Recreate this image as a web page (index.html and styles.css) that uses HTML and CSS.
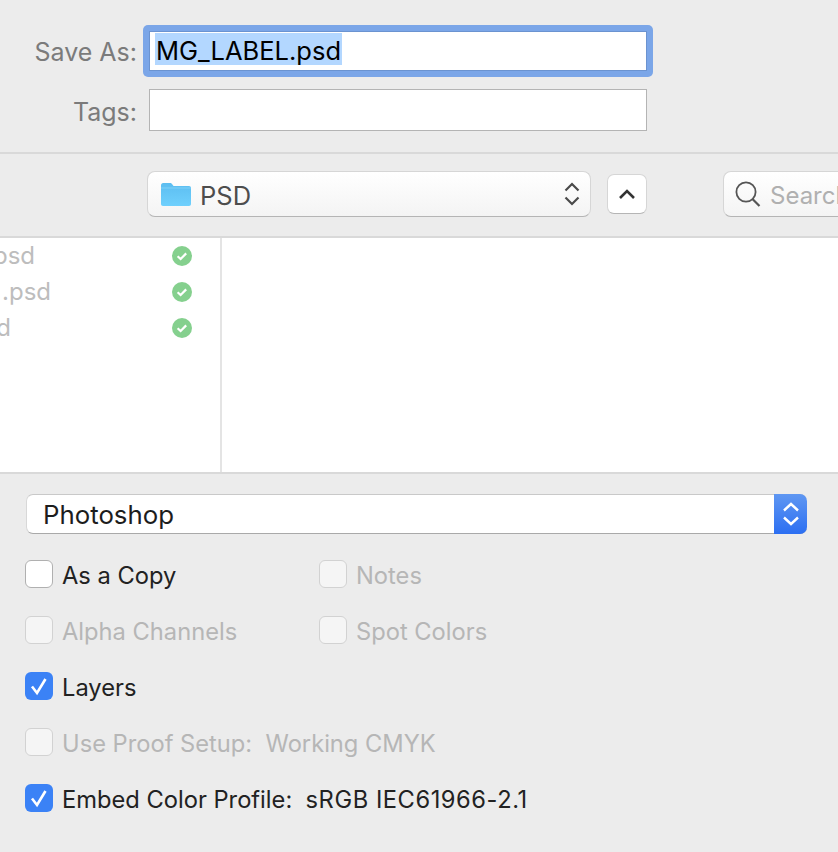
FILE: index.html
```html
<!DOCTYPE html>
<html lang="en">
<head>
    <meta charset="UTF-8">
    <meta name="viewport" content="width=device-width, initial-scale=1.0">
    <title>Save As</title>
    <link rel="stylesheet" href="styles.css">
</head>
<body>

    <!-- Name and tags -->
    <section class="name-area">
        <div class="field-row">
            <label class="field-label">Save As:</label>
            <div class="focus-ring">
                <div class="text-field text-field-focus"><span class="selected-text">MG_LABEL.psd</span></div>
            </div>
        </div>
        <div class="field-row tags-row">
            <label class="field-label">Tags:</label>
            <div class="text-field text-field-tags"></div>
        </div>
    </section>

    <!-- Folder toolbar -->
    <section class="toolbar">
        <div class="folder-select">
            <svg class="folder-icon" width="32" height="26" viewBox="0 0 32 26">
                <defs>
                    <linearGradient id="folder-fill" x1="0" y1="0" x2="0" y2="1">
                        <stop offset="0" stop-color="#5cbdf0"/>
                        <stop offset="1" stop-color="#6fd0fd"/>
                    </linearGradient>
                </defs>
                <path d="M1 4.5C1 3 1.8 2 3.2 2H10c1 0 1.6.4 2.2 1.2L13.5 5H29c1.2 0 2 .8 2 2v16c0 1.2-.8 2-2 2H3c-1.2 0-2-.8-2-2z" fill="url(#folder-fill)"/>
                <path d="M1 7h30" stroke="#7fd0f7" stroke-width="1"/>
            </svg>
            <span class="folder-name">PSD</span>
            <svg class="stepper-icon" width="18" height="26" viewBox="0 0 18 26">
                <path d="M2.5 9.5 9 3l6.5 6.5M2.5 16.5 9 23l6.5-6.5" fill="none" stroke="#4a4a4a" stroke-width="2.2"/>
            </svg>
        </div>
        <button class="up-button">
            <svg width="18" height="12" viewBox="0 0 18 12">
                <path d="M2 10 9 3l7 7" fill="none" stroke="#333" stroke-width="2.6"/>
            </svg>
        </button>
        <div class="search-box">
            <svg width="28" height="28" viewBox="0 0 28 28">
                <circle cx="12" cy="12" r="9.6" fill="none" stroke="#555" stroke-width="1.8"/>
                <path d="M18.5 19l7 7" stroke="#555" stroke-width="2.2"/>
            </svg>
            <span class="search-text">Search</span>
        </div>
    </section>

    <!-- File browser -->
    <section class="browser">
        <div class="file-column">
            <div class="file-row">
                <div class="file-name name-long"><span>psd</span></div>
                <svg class="check-badge" width="20" height="20" viewBox="0 0 20 20">
                    <circle cx="10" cy="10" r="10" fill="#85d08e"/>
                    <path d="M5.6 10.2 8.6 13l5.6-5.6" fill="none" stroke="#fff" stroke-width="2.2"/>
                </svg>
            </div>
            <div class="file-row">
                <div class="file-name name-mid"><span>.psd</span></div>
                <svg class="check-badge" width="20" height="20" viewBox="0 0 20 20">
                    <circle cx="10" cy="10" r="10" fill="#85d08e"/>
                    <path d="M5.6 10.2 8.6 13l5.6-5.6" fill="none" stroke="#fff" stroke-width="2.2"/>
                </svg>
            </div>
            <div class="file-row">
                <div class="file-name name-short"><span>d</span></div>
                <svg class="check-badge" width="20" height="20" viewBox="0 0 20 20">
                    <circle cx="10" cy="10" r="10" fill="#85d08e"/>
                    <path d="M5.6 10.2 8.6 13l5.6-5.6" fill="none" stroke="#fff" stroke-width="2.2"/>
                </svg>
            </div>
        </div>
        <div class="preview-column"></div>
    </section>

    <!-- Format options -->
    <section class="options">
        <div class="format-select">
            <span class="format-name">Photoshop</span>
            <div class="format-arrows">
                <svg width="18" height="28" viewBox="0 0 18 28">
                    <path d="M2 10.5 9 4l7 6.5M2 17.5 9 24l7-6.5" fill="none" stroke="#fff" stroke-width="2.4"/>
                </svg>
            </div>
        </div>

        <div class="check-grid">
            <div class="check-item">
                <span class="checkbox"></span>
                <span class="check-label">As a Copy</span>
            </div>
            <div class="check-item disabled">
                <span class="checkbox"></span>
                <span class="check-label">Notes</span>
            </div>
            <div class="check-item disabled">
                <span class="checkbox"></span>
                <span class="check-label">Alpha Channels</span>
            </div>
            <div class="check-item disabled">
                <span class="checkbox"></span>
                <span class="check-label">Spot Colors</span>
            </div>
            <div class="check-item wide">
                <span class="checkbox checked">
                    <svg width="28" height="28" viewBox="0 0 28 28">
                        <path d="M7 14.5 12 21 20.5 7" fill="none" stroke="#fff" stroke-width="2.6"/>
                    </svg>
                </span>
                <span class="check-label">Layers</span>
            </div>
            <div class="check-item disabled wide">
                <span class="checkbox"></span>
                <span class="check-label">Use Proof Setup:&nbsp; Working CMYK</span>
            </div>
            <div class="check-item wide">
                <span class="checkbox checked">
                    <svg width="28" height="28" viewBox="0 0 28 28">
                        <path d="M7 14.5 12 21 20.5 7" fill="none" stroke="#fff" stroke-width="2.6"/>
                    </svg>
                </span>
                <span class="check-label">Embed Color Profile:&nbsp; <span class="profile-value">sRGB IEC61966-2.1</span></span>
            </div>
        </div>
    </section>

</body>
</html>
```

FILE: styles.css
```css
/* General styling */
html, body {
    margin: 0;
    height: 852px;
    overflow: hidden;
}

body {
    background-color: #ececec;
    font-family: Inter, "Liberation Sans", sans-serif;
    font-size: 24px;
    color: #222;
}

/* Name and tags */
.name-area {
    box-sizing: border-box;
    height: 154px;
    padding-top: 25px;
    border-bottom: 2px solid #d9d9d9;
}

.field-row {
    display: flex;
    align-items: center;
    height: 52px;
}

.tags-row {
    height: 42px;
    margin-top: 12px;
}

.field-label {
    width: 137px;
    margin-right: 6px;
    padding-top: 1px;
    text-align: right;
    font-size: 25px;
    color: #7b7b7b;
}

.tags-row .field-label {
    margin-right: 12px;
    padding-top: 3px;
}

.focus-ring {
    box-sizing: border-box;
    width: 510px;
    height: 52px;
    padding: 6px;
    background-color: #7ba6e8;
    border-radius: 5px;
}

.text-field {
    box-sizing: border-box;
    background-color: #fff;
}

.text-field-focus {
    height: 40px;
    padding: 1px 5px;
    border: 1px solid #6b93d0;
    color: #000;
}

.selected-text {
    display: inline-block;
    height: 32px;
    line-height: 35px;
    padding: 0 1px;
    font-size: 25.5px;
    background-color: #b3d7ff;
}

.text-field-tags {
    width: 498px;
    height: 42px;
    border: 1px solid #b4b4b4;
}

/* Folder toolbar */
.toolbar {
    box-sizing: border-box;
    display: flex;
    align-items: center;
    height: 84px;
    padding: 0 0 2px 147px;
    border-bottom: 2px solid #d9d9d9;
    overflow: hidden;
}

.folder-select {
    box-sizing: border-box;
    display: flex;
    align-items: center;
    flex-shrink: 0;
    width: 444px;
    height: 46px;
    padding: 0 9px 0 12px;
    background: linear-gradient(#fff, #f4f4f4);
    border: 1px solid #d6d6d6;
    border-bottom-color: #b5b5b5;
    border-radius: 8px;
}

.folder-name {
    flex: 1;
    margin-left: 8px;
    padding-top: 2px;
    font-size: 25.5px;
    color: #4d4d4d;
}

.up-button {
    display: flex;
    align-items: center;
    justify-content: center;
    flex-shrink: 0;
    box-sizing: border-box;
    width: 40px;
    height: 40px;
    margin-left: 16px;
    padding: 0;
    background-color: #fff;
    border: 1px solid #d6d6d6;
    border-bottom-color: #b5b5b5;
    border-radius: 7px;
}

.search-box {
    box-sizing: border-box;
    display: flex;
    align-items: center;
    flex-shrink: 0;
    width: 200px;
    height: 46px;
    margin-left: 76px;
    padding-left: 10px;
    background: linear-gradient(#fff, #f4f4f4);
    border: 1px solid #d6d6d6;
    border-bottom-color: #b5b5b5;
    border-radius: 8px;
}

.search-text {
    margin-left: 8px;
    padding-top: 2px;
    color: #b0b0b0;
}

/* File browser */
.browser {
    box-sizing: border-box;
    display: flex;
    height: 236px;
    background-color: #fff;
    border-bottom: 2px solid #d9d9d9;
}

.file-column {
    box-sizing: border-box;
    width: 222px;
    border-right: 2px solid #e4e4e4;
}

.file-row {
    display: flex;
    align-items: center;
    justify-content: space-between;
    height: 36px;
    padding-right: 28px;
}

.file-name {
    display: flex;
    justify-content: flex-end;
    overflow: hidden;
    margin-top: -2px;
    color: #bdbdbd;
}

.name-long {
    width: 35px;
}

.name-mid {
    width: 51px;
}

.name-short {
    width: 11px;
}

.preview-column {
    flex: 1;
}

/* Format options */
.options {
    padding: 20px 31px 0 25px;
}

.format-select {
    box-sizing: border-box;
    display: flex;
    align-items: center;
    height: 40px;
    margin-left: 1px;
    background-color: #fff;
    border-top: 1px solid #c9c9c9;
    border-left: 1px solid #d8d8d8;
    border-bottom: 1px solid #a9a9a9;
    border-radius: 7px;
}

.format-name {
    flex: 1;
    margin-left: 16px;
    padding-top: 1px;
    font-size: 25.8px;
    color: #1d1d1d;
}

.format-arrows {
    display: flex;
    align-items: center;
    justify-content: center;
    width: 33px;
    height: 40px;
    margin: -1px 0;
    background: linear-gradient(#5f97f2, #2c6ff2);
    border-radius: 0 7px 7px 0;
}

.check-grid {
    display: grid;
    grid-template-columns: 294px 1fr;
    grid-auto-rows: 28px;
    row-gap: 28px;
    margin-top: 26px;
}

.check-item {
    display: flex;
    align-items: center;
    gap: 9px;
    font-size: 23.7px;
    color: #222;
}

.check-label {
    padding-top: 3px;
}

.profile-value {
    letter-spacing: 0.55px;
}

.wide {
    grid-column: 1 / -1;
}

.checkbox {
    box-sizing: border-box;
    display: block;
    flex-shrink: 0;
    width: 28px;
    height: 28px;
    background-color: #fff;
    border: 1px solid #b0b0b0;
    border-radius: 6px;
}

.checkbox.checked {
    background-color: #3b82f6;
    border: none;
}

.check-item.disabled {
    color: #b6b6b6;
}

.disabled .checkbox {
    background-color: #f5f5f5;
    border-color: #d2d2d2;
}
```
